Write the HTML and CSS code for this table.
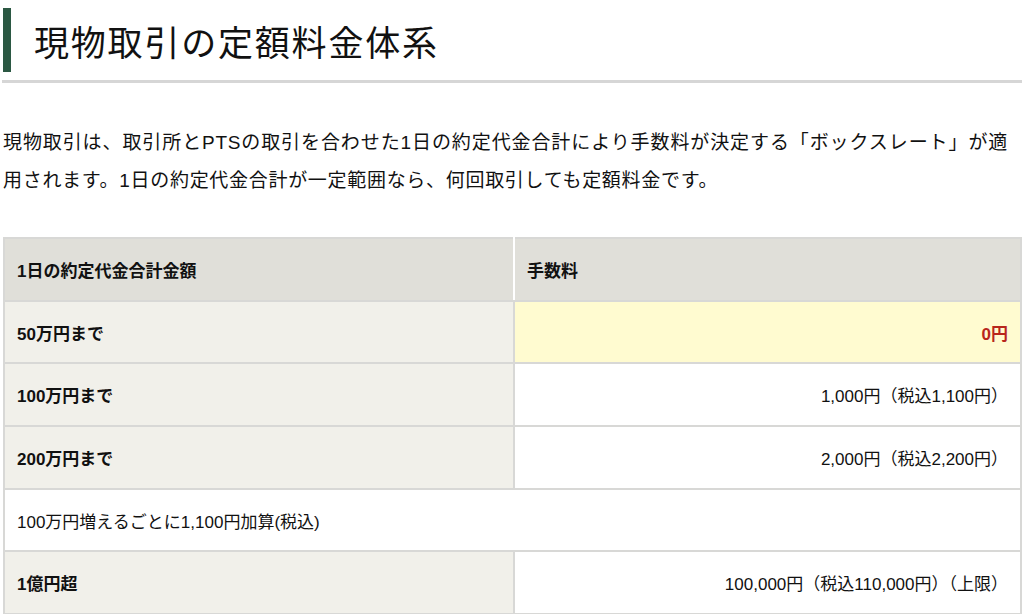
FILE: index.html
```html
<!DOCTYPE html>
<html lang="ja">
<head>
<meta charset="utf-8">
<link rel="stylesheet" href="styles.css">
</head>
<body>
<div class="page">
  <div class="heading-wrap">
    <h1 class="heading">現物取引の定額料金体系</h1>
  </div>
  <p class="lead">現物取引は、取引所とPTSの取引を合わせた1日の約定代金合計により手数料が決定する「ボックスレート」が適用されます。1日の約定代金合計が一定範囲なら、何回取引しても定額料金です。</p>
  <table class="fees">
    <thead>
      <tr>
        <th class="col-a">1日の約定代金合計金額</th>
        <th class="col-b">手数料</th>
      </tr>
    </thead>
    <tbody>
      <tr>
        <th class="label">50万円まで</th>
        <td class="value free">0円</td>
      </tr>
      <tr>
        <th class="label">100万円まで</th>
        <td class="value">1,000円（税込1,100円）</td>
      </tr>
      <tr>
        <th class="label">200万円まで</th>
        <td class="value">2,000円（税込2,200円）</td>
      </tr>
      <tr>
        <td class="note" colspan="2">100万円増えるごとに1,100円加算(税込)</td>
      </tr>
      <tr>
        <th class="label">1億円超</th>
        <td class="value">100,000円（税込110,000円）（上限）</td>
      </tr>
    </tbody>
  </table>
</div>
</body>
</html>
```
FILE: styles.css
```css
html, body {
  margin: 0;
  padding: 0;
  background: #ffffff;
}

body {
  font-family: "Liberation Sans", Arial, "Noto Sans CJK JP", sans-serif;
  color: #111111;
}

.page {
  padding: 8px 2px 0 2px;
}

.heading-wrap {
  padding-bottom: 8px;
  border-bottom: 3px solid #d6d6d6;
}

.heading {
  margin: 0 0 0 1px;
  height: 64px;
  display: flex;
  align-items: center;
  border-left: 8px solid #2b5843;
  padding-left: 23px;
  font-family: "Noto Sans CJK JP", sans-serif;
  font-weight: 400;
  font-size: 35px;
  letter-spacing: 1.8px;
  color: #111111;
}

.lead {
  margin: 41px 0 0 1px;
  width: 1005px;
  font-size: 19px;
  line-height: 38px;
  letter-spacing: 0.7px;
  text-align: justify;
  color: #111111;
}

.fees {
  margin: 37px 0 0 1px;
  width: 1019px;
  border-collapse: collapse;
  table-layout: fixed;
  font-size: 17px;
}

.fees th,
.fees td {
  height: 62.7px;
  padding: 0 12px;
  border: 2px solid #d8d8d6;
  box-sizing: border-box;
}

.fees thead th {
  background: #e0dfd9;
  text-align: left;
  font-weight: 700;
}

.fees thead .col-a {
  width: 510px;
  border-right: 2px solid #ffffff;
}

.fees .label {
  background: #f1f0ea;
  text-align: left;
  font-weight: 700;
}

.fees .value {
  text-align: right;
  background: #ffffff;
}

.fees .value.free {
  background: #fffbd0;
  color: #b8261c;
  font-weight: 700;
}

.fees .note {
  background: #ffffff;
  text-align: left;
}
```
